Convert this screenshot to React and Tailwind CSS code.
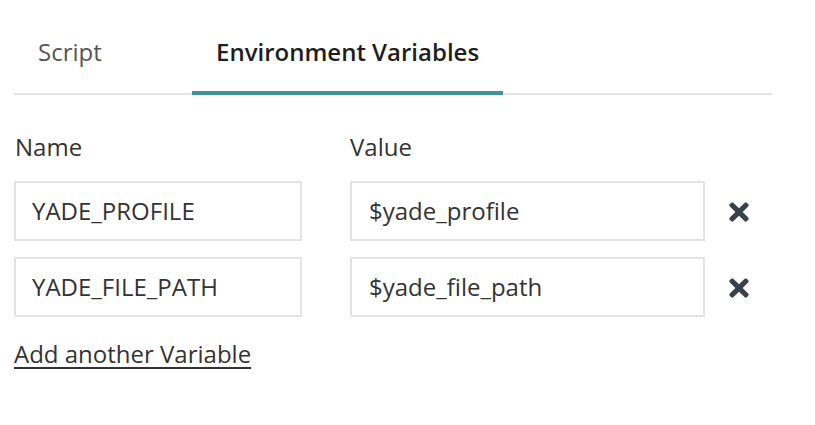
import React from "react";
import { FaTimes } from "react-icons/fa";

const rows = [
  { name: "YADE_PROFILE", value: "$yade_profile" },
  { name: "YADE_FILE_PATH", value: "$yade_file_path" },
];

export default function App() {
  return (
    <div
      className="w-[815px] h-[425px] bg-white text-[#333] text-[24px]"
      style={{ fontFamily: '"Open Sans", "Noto Sans", sans-serif' }}
    >
      <div className="pl-[14px] w-[772px]">
        <div className="flex border-b-2 border-[#e3e3e3] h-[95px]">
          <div className="w-[178px] pl-[24px] pt-[34px] text-[#555]">Script</div>
          <div className="px-[24px] pt-[34px] font-semibold text-[#1e1e1e] border-b-4 border-[#41939b] -mb-[2px]">
            Environment Variables
          </div>
        </div>
      </div>
      <div className="pl-[14px] pt-[36px]">
        <div className="flex leading-[32px]">
          <div className="w-[336px] pl-[1px]">Name</div>
          <div>Value</div>
        </div>
        <div className="mt-[18px] flex flex-col gap-[16px]">
          {rows.map((r) => (
            <div key={r.name} className="flex items-center">
              <div className="w-[288px] h-[60px] border-2 border-[#e3e3e3] pl-[16px] flex items-center">
                {r.name}
              </div>
              <div className="ml-[48px] w-[355px] h-[60px] border-2 border-[#e3e3e3] pl-[17px] flex items-center">
                {r.value}
              </div>
              <FaTimes className="ml-[20px] mt-[1px] text-[#38404a]" size={28} />
            </div>
          ))}
        </div>
        <div className="mt-[21px] leading-[32px]">
          <a className="underline underline-offset-[4px] decoration-[2px] text-[#333]">Add another Variable</a>
        </div>
      </div>
    </div>
  );
}
